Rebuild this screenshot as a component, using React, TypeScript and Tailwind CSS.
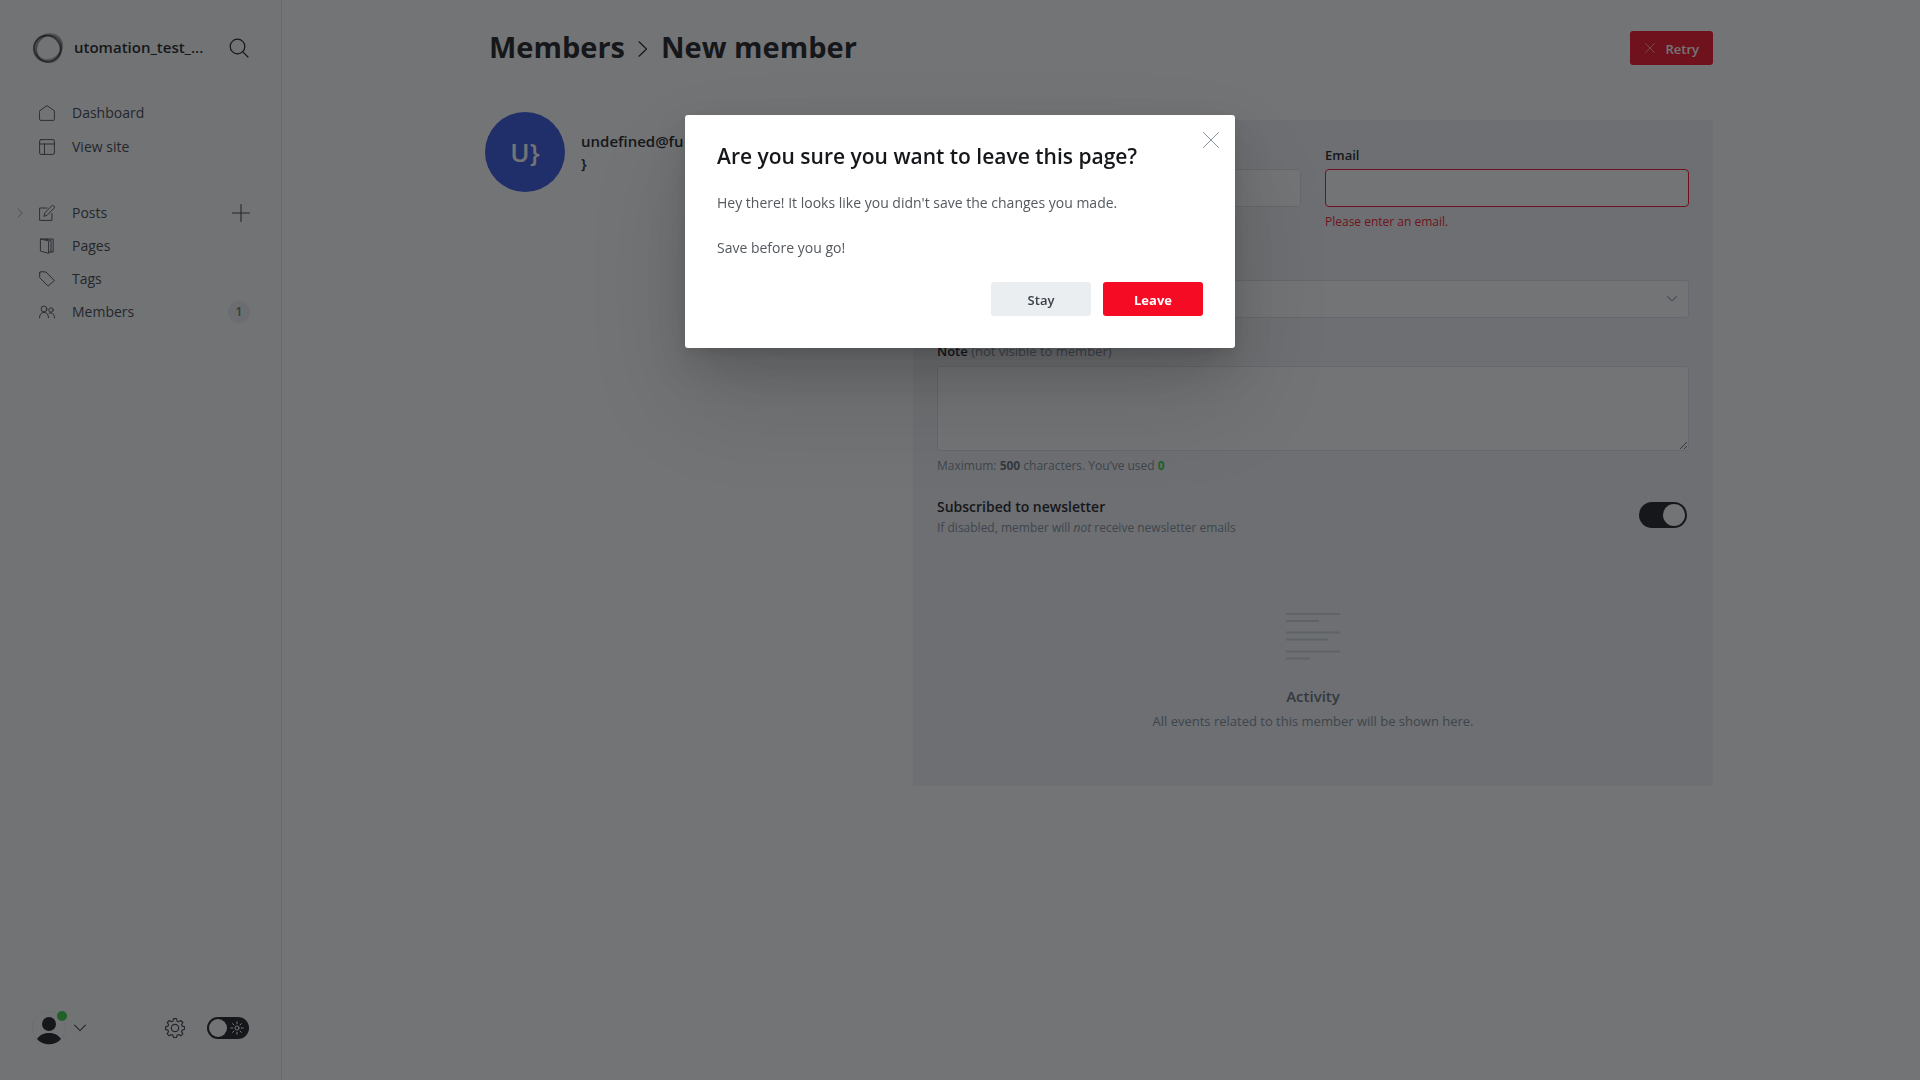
import type { ReactNode } from "react";

function Icon({ size = 16, box = 24, width = 1.3, className = "", children }: { size?: number; box?: number; width?: number; className?: string; children: ReactNode }) {
  return (
    <svg width={size} height={size} viewBox={`0 0 ${box} ${box}`} fill="none" stroke="currentColor" strokeWidth={width} strokeLinecap="round" strokeLinejoin="round" aria-hidden="true" className={`shrink-0 ${className}`}>
      {children}
    </svg>
  );
}

function NavItem({ label, icon, before, after }: { label: string; icon: ReactNode; before?: ReactNode; after?: ReactNode }) {
  return (
    <li className="flex h-[33px] items-center pr-[31px]">
      <span className="flex w-[39px] items-center pl-[15px] text-[#90979d]">{before}</span>
      <a href="#" className="flex flex-1 items-center gap-[17px] text-[#394047]">
        {icon}
        <span className="text-[14px] leading-5">{label}</span>
      </a>
      {after}
    </li>
  );
}

function Orb() {
  return (
    <svg width="32" height="32" viewBox="0 0 32 32" fill="none" stroke="#15171a" aria-hidden="true" className="shrink-0">
      <ellipse cx="15.2" cy="16.6" rx="13.4" ry="13.2" strokeWidth="1.8" opacity=".6" />
      <ellipse cx="17" cy="16.4" rx="13.4" ry="12.2" transform="rotate(-55 17 16.4)" strokeWidth="1.4" opacity=".5" />
      <ellipse cx="16.6" cy="15" rx="14" ry="12.4" transform="rotate(-38 16.6 15)" strokeWidth="2" opacity=".3" />
      <ellipse cx="15.6" cy="17" rx="14" ry="12.6" transform="rotate(48 15.6 17)" strokeWidth="1.6" opacity=".35" />
    </svg>
  );
}

function Sidebar() {
  return (
    <aside className="flex w-[282px] shrink-0 flex-col border-r border-[#e4e8eb] bg-[#fbfcfc]">
      <div className="flex h-24 items-center pr-8 pl-8">
        <Orb />
        <span className="ml-[10px] flex-1 pb-[2px] text-[15px] leading-5 font-semibold text-[#15171a]">utomation_test_...</span>
        <button type="button" aria-label="Search" className="text-[#15171a]">
          <Icon size={20} box={20} width={1.2}>
            <circle cx="8.5" cy="8.5" r="7.3" />
            <path d="M13.8 13.8 19 19" />
          </Icon>
        </button>
      </div>
      <nav className="flex flex-1 flex-col">
        <ul className="flex flex-col gap-px">
          <NavItem
            label="Dashboard"
            icon={<Icon size={16} box={16} width={0.9}><path d="M.6 5.8 8 .6l7.4 5.2v8.6a1 1 0 0 1-1 1H1.600a1 1 0 0 1-1-1z" /></Icon>}
          />
          <NavItem
            label="View site"
            icon={<Icon size={16} box={16} width={0.9}><rect x=".6" y=".6" width="14.800" height="14.800" rx="1.500" /><path d="M.6 5h14.800M5.500 5v10.400" /></Icon>}
          />
        </ul>
        <ul className="mt-[33px]">
          <NavItem
            label="Posts"
            before={<Icon size={10} box={10} width={0.9}><path d="m3 .8 4.200 4.200L3 9.200" /></Icon>}
            icon={<Icon size={16} box={16} width={0.9}><path d="M8 3H.6v12.400h12.300V8.500" /><path d="m5 11 .9-3.300L12.800.8a1.300 1.300 0 0 1 1.900 0l.4.4a1.300 1.300 0 0 1 0 1.900L8.300 10z" /></Icon>}
            after={
              <button type="button" aria-label="New post" className="text-[#394047]">
                <Icon size={18} box={18} width={1.1}><path d="M9 .6v16.800M.6 9h16.800" /></Icon>
              </button>
            }
          />
          <NavItem
            label="Pages"
            icon={<Icon size={16} box={16} width={0.9}><path d="M1.800 1 9.600 3v12.400L1.800 13.200z" /><path d="M1.800 1h12.400v13H9.600M6.500 1l5.500 1.600V14" /></Icon>}
          />
          <NavItem
            label="Tags"
            icon={<Icon size={16} box={16} width={0.9}><path d="M.7 2v4.600l8.300 8.500 6.400-5.500L7 1 2 .7A1.200 1.200 0 0 0 .7 2z" /></Icon>}
          />
          <NavItem
            label="Members"
            icon={<Icon size={16} box={16} width={0.9}><circle cx="5" cy="5" r="2.900" /><path d="M.5 13.800c0-3.400 1.800-5.400 4.500-5.400s4.500 2 4.500 5.400" /><circle cx="12" cy="6" r="2.200" /><path d="M10.200 9.200c3-1.300 5.200.8 5.300 4.600" /></Icon>}
            after={<span className="flex size-[22px] items-center justify-center rounded-full bg-[#ebeef0] text-[12px] font-semibold text-[#626d79]">1</span>}
          />
        </ul>
      </nav>
      <div className="flex items-center px-8 pb-[35px]">
        <button type="button" aria-label="Account menu" className="relative flex items-center gap-2 text-[#394047]">
          <svg width="34" height="34" viewBox="0 0 34 34" aria-hidden="true">
            <circle cx="17" cy="17" r="16.500" fill="none" stroke="#eceff1" />
            <circle cx="17" cy="13" r="7" fill="#15171a" />
            <path d="M5 28c3-4.500 7.500-6 12-6S26 23.500 29 28c-3.500 3.800-7.500 5.300-12 5.300S8.500 31.800 5 28z" fill="#15171a" />
          </svg>
          <span className="absolute top-0 left-[25px] size-[10px] rounded-full bg-[#30cf43]" />
          <Icon size={12} box={12} width={1.1}><path d="m.6 3.200 5.400 5.500 5.400-5.500" /></Icon>
        </button>
        <button type="button" aria-label="Settings" className="mr-[22px] ml-auto text-[#394047]">
          <Icon size={20} box={20} width={1.2}>
            <circle cx="10" cy="10" r="3.700" />
            <path d="M8.600.7h2.800l.7 2.500 1.500.6 2.200-1.300 2 2-1.300 2.200.7 1.500 2.400.6v2.600l-2.500.7-.6 1.500 1.300 2.200-2 2-2.200-1.300-1.500.7-.7 2.400H8.600l-.7-2.500-1.500-.6-2.200 1.300-2-2 1.300-2.200-.6-1.500-2.400-.7V8.800l2.400-.6.7-1.500-1.300-2.200 2-2 2.200 1.300 1.400-.6z" />
          </Icon>
        </button>
        <span className="relative flex">
          <input type="checkbox" aria-label="Night mode" className="h-[22px] w-[42px] appearance-none rounded-full bg-[#15171a] before:mt-[2px] before:ml-[2px] before:block before:size-[18px] before:rounded-full before:bg-white before:content-['']" />
          <Icon size={14} box={14} width={1} className="pointer-events-none absolute top-1 right-[5px] text-white">
            <circle cx="7" cy="7" r="2" />
            <path d="M7 .8v2M7 11.200v2M.8 7h2M11.200 7h2M2.600 2.600 4 4M10 10l1.400 1.400M2.600 11.400 4 10M10 4l1.400-1.400" />
          </Icon>
        </span>
      </div>
    </aside>
  );
}

const field = "block w-full rounded-[3px] border border-[#dde1e5] bg-white px-3 outline-none";
const fieldError = "block w-full rounded-[4px] border border-[#f50b23] bg-white px-3 outline-none";
const label = "block text-[13px] leading-5 font-semibold text-[#15171a]";

function MemberForm() {
  return (
    <form className="bg-[#f1f3f4] px-6 pt-[25px] pb-[55px]">
      <div className="grid grid-cols-2 gap-6">
        <div className="pt-5">
          <input aria-label="Name" className={`${field} mt-1 h-[38px]`} />
        </div>
        <div>
          <label htmlFor="email" className={label}>Email</label>
          <input id="email" type="email" aria-describedby="email-error" className={`${fieldError} mt-1 h-[38px]`} />
          <p id="email-error" className="mt-[5px] text-[12px] leading-5 text-[#f50b23]">Please enter an email.</p>
        </div>
      </div>
      <div className="mt-6">
        <label htmlFor="labels" className={label}>Labels</label>
        <div className="relative mt-1">
          <select id="labels" className={`${field} h-[38px] appearance-none`} />
          <Icon size={12} box={12} width={1.500} className="pointer-events-none absolute top-[13px] right-[11px] text-[#aeb7c1]"><path d="m1.500 3.500 4.500 4.500 4.500-4.500" /></Icon>
        </div>
      </div>
      <div className="mt-[23px]">
        <label htmlFor="note" className={label}>
          Note <span className="font-normal text-[#7c8b9a]">(not visible to member)</span>
        </label>
        <textarea id="note" className={`${field} mt-[5px] h-[85px]`} />
        <p className="mt-[5px] text-[12px] leading-5 text-[#7c8b9a]">
          Maximum: <b className="text-[#626d79]">500</b> characters. You’ve used <b className="text-[#30cf43]">0</b>
        </p>
      </div>
      <div className="mt-[21px] flex items-start justify-between">
        <div>
          <label htmlFor="newsletter" className="block text-[14px] leading-5 font-semibold text-[#15171a]">Subscribed to newsletter</label>
          <p className="mt-px text-[12px] leading-5 text-[#7c8b9a]">If disabled, member will <em>not</em> receive newsletter emails</p>
        </div>
        <input id="newsletter" type="checkbox" defaultChecked className="mt-[5px] mr-[2px] h-[26px] w-12 appearance-none rounded-full bg-[#15171a] before:mt-[2px] before:ml-6 before:block before:size-[22px] before:rounded-full before:bg-white before:content-['']" />
      </div>
      <div className="mt-[74px] flex flex-col items-center">
        <svg width="54" height="50" viewBox="0 0 54 50" stroke="#ced4d9" strokeWidth="2" aria-hidden="true">
          <path d="M0 2h54M0 9h33M0 20.500h54M0 27.500h42M0 39.500h54M0 46.500h24" />
        </svg>
        <h4 className="mt-[22px] text-[15px] leading-6 font-semibold text-[#626d79]">Activity</h4>
        <p className="mt-[3px] text-[13px] leading-5 text-[#7c8b9a]">All events related to this member will be shown here.</p>
      </div>
    </form>
  );
}

function LeaveDialog() {
  return (
    <div className="fixed inset-0 flex items-start justify-center bg-[#15171a]/60 pt-[115px]">
      <section role="dialog" aria-modal="true" aria-labelledby="leave-title" className="relative w-[550px] rounded-[3px] bg-white p-8 pt-[26px] shadow-[0_4px_10px_rgba(0,0,0,0.08),0_20px_40px_rgba(0,0,0,0.12),0_50px_100px_rgba(0,0,0,0.14)]">
        <button type="button" aria-label="Close" className="absolute top-[17px] right-4 text-[#7c8b9a]">
          <Icon size={16} box={16} width={0.9}><path d="m.5.5 15 15M15.500.5l-15 15" /></Icon>
        </button>
        <h1 id="leave-title" className="text-[21px] leading-[30px] font-semibold text-[#15171a]">Are you sure you want to leave this page?</h1>
        <p className="mt-[22px] text-[14px] leading-5 text-[#54595f]">Hey there! It looks like you didn't save the changes you made.</p>
        <p className="mt-[25px] text-[14px] leading-5 text-[#54595f]">Save before you go!</p>
        <div className="mt-6 flex justify-end gap-3">
          <button type="button" className="h-[34px] w-[100px] rounded-[3px] bg-[#ebeef0] pt-[3px] text-[13px] font-semibold text-[#394047]">Stay</button>
          <button type="button" className="h-[34px] w-[100px] rounded-[3px] bg-[#f50b23] pt-[3px] text-[13px] font-bold text-white">Leave</button>
        </div>
      </section>
    </div>
  );
}

export default function App() {
  return (
    <div className="flex min-h-screen bg-white font-['Open_Sans','Noto_Sans',sans-serif]">
      <Sidebar />
      <main className="flex-1 px-8">
        <div className="mx-auto max-w-[1224px]">
          <header className="flex h-24 items-center justify-between">
            <h2 className="flex items-center gap-[10px] pb-[2px] text-[29px] leading-10 font-bold text-[#15171a]">
              <a href="#">Members</a>
              <Icon size={16} box={16} width={1.200} className="mt-1"><path d="m4 .8 7.500 7.200L4 15.200" /></Icon>
              <span>New member</span>
            </h2>
            <button type="button" className="flex h-[34px] items-center gap-[10px] rounded-[3px] bg-[#f50b23] pr-[14px] pl-[15px] text-[13px] font-semibold text-white">
              <Icon size={10} box={10} width={0.600}><path d="m.5.5 9 9M9.500.5l-9 9" /></Icon>
              <span className="pt-[3px]">Retry</span>
            </button>
          </header>
          <div className="mt-6 grid grid-cols-[1fr_800px] items-start">
            <div className="-mt-2 -ml-1 flex items-center gap-4">
              <span className="flex size-20 shrink-0 items-center justify-center rounded-full bg-[#3053de] text-[26px] font-semibold text-white">{"U}"}</span>
              <p className="text-[15px] leading-[22px] font-semibold text-[#15171a]">undefined@fu<br />{"}"}</p>
            </div>
            <MemberForm />
          </div>
        </div>
      </main>
      <LeaveDialog />
    </div>
  );
}
